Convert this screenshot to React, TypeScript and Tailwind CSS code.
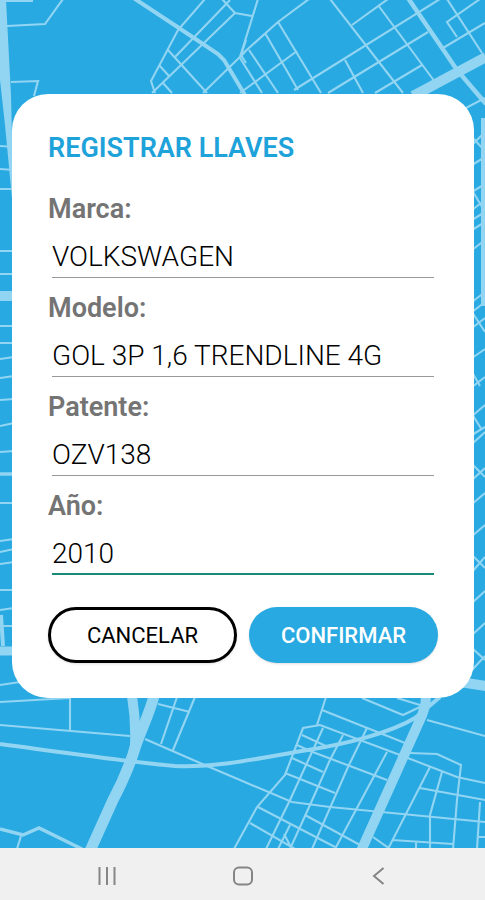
import { useState } from 'react';

interface FieldProps {
  id: string;
  label: string;
  value: string;
  active?: boolean;
  onChange: (value: string) => void;
}

const streets = [
  // top left
  'M5 1H33M7 26L45 24L63 -1M11 82L38 81L34 96',
  // top centre
  'M205 -1L178 30L151 81L155 93M230 0L175 57M222 -1L235 13L152 93M235 13L252 16M168 50L207 93M159 65L169 76M163 83L172 93M245 52L203 93M246 40L241 55L246 63',
  'M258 -1L240 57M309 -1L278 22L240 56M278 22L321 93M265 33L298 90M249 50L278 93M240 58L262 93M240 93L297 51',
  // top right
  'M294 90L440 -1M330 -1L403 93M352 25L388 -1M378 5L435 82M328 93L428 32M345 60L363 93M375 93L422 65',
  'M447 -1L482 53M480 -1L447 22L457 37M443 48L485 23M462 110L485 98',
  // left edge
  'M0 146L14 147M0 169L14 170M0 189H14M0 251H14M0 274H14M0 326H14M0 343H14M0 359L14 357M0 378L14 376M0 400L14 399',
  'M0 426L14 423M0 452L14 451M0 503H14M0 541L14 539M0 552L14 549M0 564L14 562M0 590H14M0 610L14 608M0 626H14M0 685L20 682M0 702L70 698',
  // right edge
  'M472 145L485 132M472 165L485 157M472 192L485 184M472 210L485 200M472 220L485 212M472 230L485 222M472 250L485 240M472 302L485 292M472 312L485 302M472 358L485 349M472 387L485 377M472 416L485 405',
  'M472 137L485 151M472 190L485 212M472 312L485 332M485 318L472 328M472 372L480 386M472 414L482 430M472 435L485 427M472 444L485 432M472 464L485 477M472 480L485 468M472 504L485 493M472 536L485 525M472 555L485 568M472 572L485 557M472 603L485 591M472 635L485 623M472 648L485 660M472 670L485 656',
  // bottom left
  'M70 698V730M0 725L130 736M158 704L190 712M177 697L161 744M195 697L173 750M145 739L200 763L240 780L292 802L330 807L485 822M21 836L17 849',
  // bottom centre
  'M234 849L240 838L257 807L285 775L303 728L320 725L400 755L457 777L485 783M326 697L317 725M322 710L405 743M362 698L403 715L422 706M397 698L420 705M427 720L485 736',
  'M323 728L312 752L290 800L266 849M343 735L330 760L310 805L290 849M367 728L348 767L312 849M387 752L335 849',
  'M302 735L328 747M297 745L310 751L387 780M292 758L323 772M285 773L335 793M258 807L335 847M305 815L360 845M250 823L295 849M290 825L278 849M284 834L292 849',
  // bottom right
  'M410 753L437 754L461 765L457 800L453 849M420 788L485 800M430 767L388 849M442 772L430 815V849M392 840L453 844M373 837L390 849M480 802L477 849M478 837H485M416 842V849',
];

function MapBackground() {
  return (
    <svg
      className="absolute inset-0 h-full w-full"
      viewBox="0 0 485 848"
      preserveAspectRatio="xMidYMid slice"
      fill="none"
      stroke="#91d5f3"
      aria-hidden="true"
    >
      <g strokeWidth="2.1">
        {streets.map((d, i) => (
          <path key={i} d={d} />
        ))}
      </g>

      {/* avenues */}
      <path d="M132 -3L179 28L218 54L224 60L245 95" strokeWidth="4" />
      <path d="M408 -2L457 70L486 104" strokeWidth="4.5" />
      <path d="M413 96L486 57" strokeWidth="10" />
      <path d="M0 474H14M0 829L23 835L39 828L82 849" strokeWidth="3.5" />
      <path d="M0 744C60 752 130 762 175 766C220 768 270 756 308 750S390 733 415 718L440 697" strokeWidth="4" />
      <path d="M0 296H14" strokeWidth="10" />
      <path d="M1 615L3 646" strokeWidth="4" />
      <path d="M0 651H14" strokeWidth="9" />
      <path d="M460 682L486 686" strokeWidth="10" />
      <path d="M483 118V306" strokeWidth="4" />
      <path d="M0 0H6L11 95L14 220L5 125L0 80Z" fill="#91d5f3" stroke="none" />

      {/* highways */}
      <path d="M132 696Q136 720 135 745L131 763" strokeWidth="10" />
      <path d="M154 696C150 712 142 728 136 745C130 765 122 783 113 800L90 851" strokeWidth="11" />
      <path d="M426 696Q426 708 419 722L361 851" strokeWidth="10" />
    </svg>
  );
}

function Field({ id, label, value, active, onChange }: FieldProps) {
  return (
    <div className="flex h-[99px] flex-col">
      <label htmlFor={id} className="text-[27px] leading-[30px] font-semibold text-[#747474]">
        {label}
      </label>
      <input
        id={id}
        type="text"
        value={value}
        onChange={(e) => onChange(e.target.value)}
        className={`mx-1 mt-2.5 bg-transparent pt-0.5 text-[28px] font-light text-black outline-none ${
          active ? 'h-11 border-b-2 border-[#178a78]' : 'h-11 border-b border-[#999999]'
        }`}
      />
    </div>
  );
}

export default function App() {
  const [form, setForm] = useState({
    marca: 'VOLKSWAGEN',
    modelo: 'GOL 3P 1,6 TRENDLINE 4G',
    patente: 'OZV138',
    anio: '2010',
  });

  return (
    <div className="flex min-h-screen flex-col bg-[#f0f0f0] font-['Roboto',sans-serif]">
      <main className="relative flex-1 overflow-hidden bg-[#28a9e1] pt-[94px] pr-[11px] pb-[150px] pl-3">
        <MapBackground />

        <form
          onSubmit={(e) => e.preventDefault()}
          className="relative rounded-[36px] bg-white px-9 pt-9 pb-[35px]"
        >
          <h1 className="mb-7 text-[27px] leading-9 font-semibold text-[#1ea2da]">REGISTRAR LLAVES</h1>

          <Field id="marca" label="Marca:" value={form.marca} onChange={(marca) => setForm({ ...form, marca })} />
          <Field id="modelo" label="Modelo:" value={form.modelo} onChange={(modelo) => setForm({ ...form, modelo })} />
          <Field id="patente" label="Patente:" value={form.patente} onChange={(patente) => setForm({ ...form, patente })} />
          <Field id="anio" label="Año:" value={form.anio} active onChange={(anio) => setForm({ ...form, anio })} />

          <div className="mt-[17px] grid grid-cols-2 gap-3">
            <button
              type="button"
              className="h-14 rounded-full border-[3px] border-black bg-white text-[22px] text-black shadow-sm"
            >
              CANCELAR
            </button>
            <button
              type="submit"
              className="h-14 rounded-full bg-[#28a9e1] text-[22px] font-medium text-white shadow-sm"
            >
              CONFIRMAR
            </button>
          </div>
        </form>
      </main>

      {/* Android navigation bar */}
      <nav className="flex h-[52px] items-center justify-center gap-28 pt-1 text-[#858585]">
        <button type="button" aria-label="Recientes">
          <svg width="24" height="24" viewBox="0 0 24 24" fill="none" stroke="currentColor" strokeWidth="2">
            <path d="M4.5 3V21M12 3V21M19.5 3V21" />
          </svg>
        </button>
        <button type="button" aria-label="Inicio">
          <svg width="24" height="24" viewBox="0 0 24 24" fill="none" stroke="currentColor" strokeWidth="2">
            <rect x="3" y="3.5" width="18" height="17" rx="5" />
          </svg>
        </button>
        <button type="button" aria-label="Atrás">
          <svg width="24" height="24" viewBox="0 0 24 24" fill="none" stroke="currentColor" strokeWidth="2">
            <path d="M16.5 4L7 12L16.5 20" />
          </svg>
        </button>
      </nav>
    </div>
  );
}
